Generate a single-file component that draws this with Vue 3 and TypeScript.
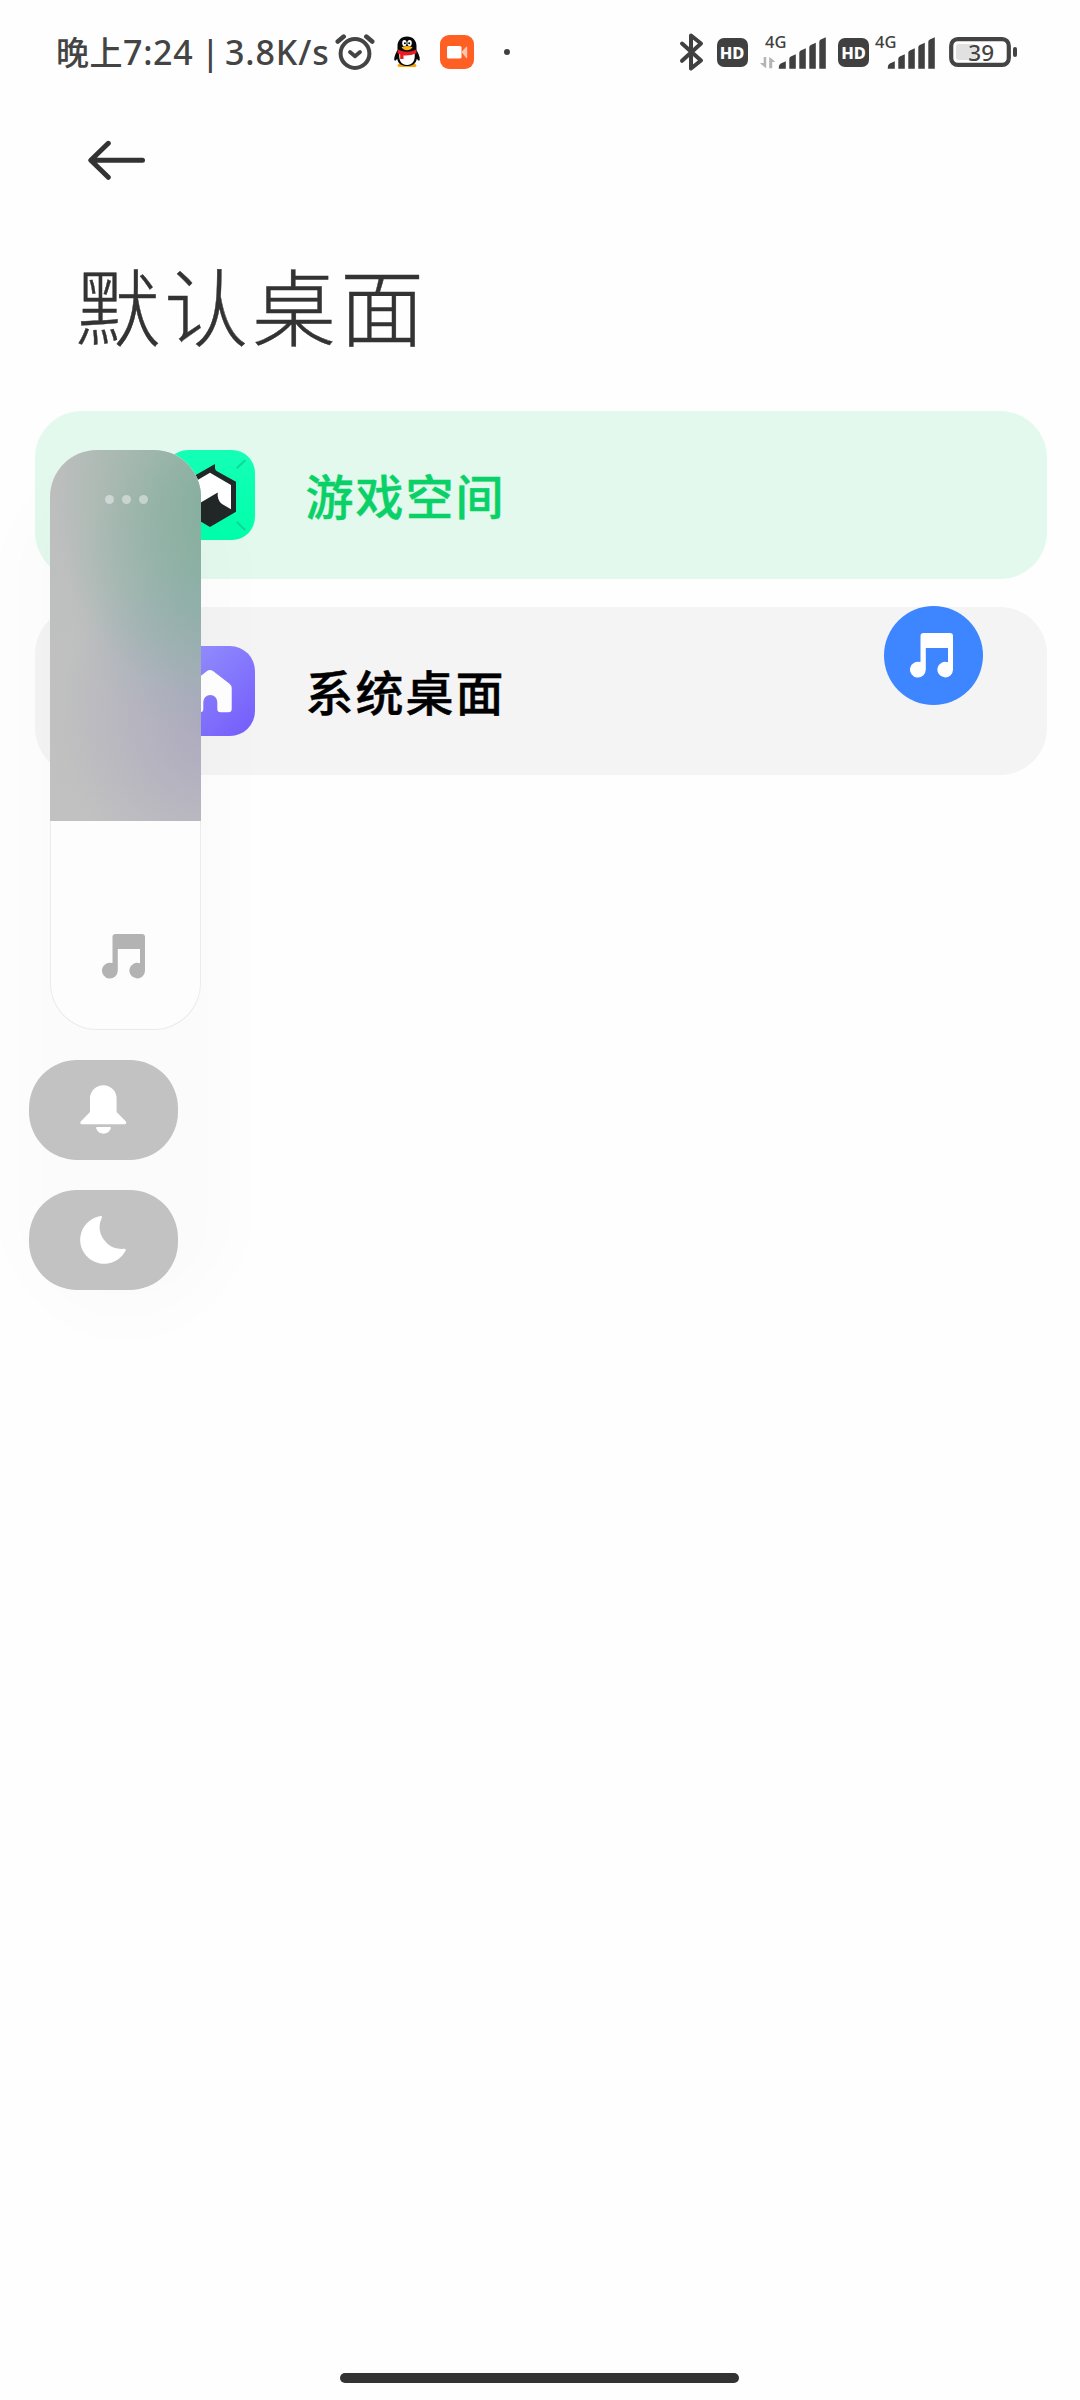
<script setup lang="ts">
interface Launcher {
  id: string
  name: string
  active: boolean
}

const launchers: Launcher[] = [
  { id: 'game', name: '游戏空间', active: true },
  { id: 'system', name: '系统桌面', active: false },
]

const notePath =
  'M13.5 0H40a3 3 0 0 1 3 3v33.5a7.8 7.8 0 1 1-5-7.2V15H15.8v21.5a7.9 7.9 0 1 1-5.3-7.4V3a3 3 0 0 1 3-3z'

const barsPath =
  'M0 30v-1.500q0-2.500 2-3.600l5-2.400v7.500zM10.500 30V20q0-1.500 1.500-2.200l5-2.300V30zM20.500 30V14q0-1.500 1.500-2.200l5-2.300V30zM30.500 30V8.500q0-1.500 1.500-2.200l5-2.300V30zM40.500 30V3q0-1.500 1.500-2.200l5-2.300V30z'
</script>

<template>
  <div class="page">
    <header class="status">
      <div class="status-left">
        <span class="clock"><span class="han">晚上</span><span class="time">7:24</span></span>
        <span class="sep">|</span>
        <span class="speed">3.8K/s</span>
        <svg class="alarm" width="40" height="40" viewBox="0 0 40 40">
          <g fill="none" stroke="#444" stroke-width="4" stroke-linecap="round" stroke-linejoin="round">
            <circle cx="20" cy="21.500" r="14.400" />
            <path d="M2.800 9.500L8.700 4.600M37.200 9.500L31.300 4.600" stroke-width="4.600" />
            <path d="M15 20l5 4.300L25 20" stroke-width="3.800" />
          </g>
        </svg>
        <svg class="qq" width="34" height="34" viewBox="0 0 34 34">
          <path d="M8.500 29q4-2 8.500-1.500T25.500 29l1 1.500q0 1.500-3 1.500h-12q-4 0-4-1.500z" fill="#f7a500" />
          <path d="M17 1.500c6 0 9.500 4.200 9.500 9.500v4c1.500 3 3.500 6.500 3.300 9.500-.2 1.800-1.500 1.500-3-.8C26 28.500 22.500 31 17 31S8 28.500 7.200 23.700c-1.500 2.300-2.800 2.600-3 .8C4 21.500 6 18 7.500 15v-4c0-5.300 3.500-9.500 9.500-9.500z" fill="#080808" />
          <path d="M9.500 17q7.500 3 15 0c1.200 8-1.500 13-7.500 13S8.300 25 9.500 17z" fill="#fff" />
          <path d="M8 14.500q9 4.500 18.500 0v3.700q-6 2.700-13 2.200V24H10.200v-4.600Q8 18.800 7.500 18z" fill="#ed1c24" />
          <ellipse cx="14.400" cy="8" rx="2.200" ry="3.100" fill="#fff" />
          <ellipse cx="19.600" cy="8" rx="2.200" ry="3.100" fill="#fff" />
          <circle cx="14.900" cy="8.200" r="1" /><circle cx="19.200" cy="8.200" r="1" />
          <path d="M11.500 12.300q5.500-2.600 11 0-2 3-5.500 3t-5.500-3z" fill="#f7b416" />
        </svg>
        <svg class="cam" width="34" height="34" viewBox="0 0 34 34">
          <rect width="34" height="34" rx="9" fill="#ff5f22" />
          <path d="M21.500 17l4.700-5.300q1-.5 1 1v9.500q0 1.400-1 .8z" fill="#ffc4ab" />
          <rect x="7" y="11" width="14.500" height="12.500" rx="1.500" fill="#fff" />
        </svg>
        <i class="dot"></i>
      </div>

      <div class="status-right">
        <svg class="bt" width="26" height="40" viewBox="0 0 26 40">
          <path d="M3 11.500L22 28.500 12 36.500V3.500l10 8L3 28.800" fill="none" stroke="#404040" stroke-width="4" stroke-linejoin="round" stroke-linecap="round" />
        </svg>
        <span class="hd">HD</span>
        <svg class="signal first" width="67" height="50" viewBox="0 0 67 50">
          <text x="5" y="21" class="net">4G</text>
          <path d="M6.200 30v11.200q-3-1.800-6.200-5.200h3.700v-6zM9.200 41.200V30q3 1.500 6 5h-3v6.200z" fill="#b4b4b4" />
          <path :d="barsPath" transform="translate(18.800 11.700)" fill="#404040" />
        </svg>
        <span class="hd second">HD</span>
        <svg class="signal" width="60" height="50" viewBox="0 0 60 50">
          <text x="0" y="21" class="net">4G</text>
          <path :d="barsPath" transform="translate(12.800 11.700)" fill="#404040" />
        </svg>
        <svg class="battery" width="68" height="30" viewBox="0 0 68 30">
          <rect x="2.200" y="2.200" width="57.600" height="25.600" rx="6.500" fill="none" stroke="#444" stroke-width="4.200" />
          <rect x="7" y="7" width="20" height="16" rx="3" fill="#e1e1e1" />
          <rect x="64" y="10" width="4" height="10" rx="2" fill="#444" />
          <text x="19.300" y="23.600" class="level">39</text>
        </svg>
      </div>
    </header>

    <nav class="nav">
      <svg width="58" height="40" viewBox="0 0 58 40">
        <path d="M54.500 20.300H3M20.300 3.300L2.800 20.300l17.500 17" fill="none" stroke="#333" stroke-width="5" stroke-linecap="round" stroke-linejoin="round" />
      </svg>
    </nav>

    <h1 class="title">默认桌面</h1>

    <main class="list">
      <div v-for="item in launchers" :key="item.id" class="card" :class="{ active: item.active }">
        <svg v-if="item.id === 'game'" width="90" height="90" viewBox="0 0 90 90">
          <defs>
            <linearGradient id="game-bg" x1="0" y1="0" x2="0" y2="1">
              <stop offset="0" stop-color="#14ffb6" />
              <stop offset="1" stop-color="#00ffaa" />
            </linearGradient>
          </defs>
          <rect width="90" height="90" rx="23" fill="url(#game-bg)" />
          <path d="M71.700 18.300L80.300 10.300M71.700 71.700L80.300 80.300M18.300 18.300L9.700 10.300M18.300 71.700L9.700 80.300" stroke="#08dc98" stroke-width="2.200" />
          <path d="M50 14v4q0 2.200 2 3.200l19 10.500v30L45 77 19 61.700v-30z" fill="#222827" />
          <path d="M45 22.700L66 35v24.300L57 54q-5-3.500-4.300-11.500L24 59.500V35z" fill="#fff" />
        </svg>
        <svg v-else width="90" height="90" viewBox="0 0 90 90">
          <defs>
            <linearGradient id="home-bg" x1="0" y1="0" x2="1" y2="1">
              <stop offset="0.200" stop-color="#928dff" />
              <stop offset="1" stop-color="#745bfc" />
            </linearGradient>
          </defs>
          <rect width="90" height="90" rx="25" fill="url(#home-bg)" />
          <path d="M42 25q3-2.200 6 0l16.500 12.800q2.200 1.800 2.200 4.500V63q0 3.300-3.300 3.300h-7.800q-3.300 0-3.300-3.300v-7a7 7 0 0 0-14 0v7q0 3.300-3.300 3.300h-8q-3.300 0-3.300-3.300V42.300q0-2.700 2.200-4.500z" fill="#fff" />
        </svg>
        <span class="name">{{ item.name }}</span>
      </div>
    </main>

    <i class="home-bar"></i>

    <div class="fab">
      <svg width="43" height="44.500" viewBox="0 0 43 44.500"><path :d="notePath" fill="#fff" /></svg>
    </div>

    <i class="haze"></i>
    <aside class="volume">
      <div class="level-empty">
        <div class="more"><i></i><i></i><i></i></div>
      </div>
      <div class="level-full">
        <svg width="43" height="44.500" viewBox="0 0 43 44.500"><path :d="notePath" fill="#b3b3b3" /></svg>
      </div>
    </aside>
    <aside class="modes">
      <div class="mode">
        <svg width="149" height="100" viewBox="0 0 149 100">
          <path d="M61 38.500a13.300 13.300 0 0 1 26.600 0V52l9.300 9.500q1 2.700-1.500 2.700H53q-2.500 0-1.300-2.700L61 52zM68 67h13q1.500.3.800 1.500-2.300 5.200-7.300 5.200t-7.300-5.200Q66.500 67.300 68 67z" fill="#fff" />
        </svg>
      </div>
      <div class="mode">
        <svg width="149" height="100" viewBox="0 0 149 100">
          <path d="M71.500 26.100q2-.2 1.200 1.800A22 22 0 0 0 95 58.800q2.300-.2 1.500 2A24 24 0 1 1 71.500 26.100z" fill="#fff" />
        </svg>
      </div>
    </aside>
  </div>
</template>

<style>
body {
  margin: 0;
  background: #fefefe;
}
</style>

<style scoped>
.page {
  position: relative;
  display: flex;
  flex-direction: column;
  width: 1080px;
  height: 2400px;
  overflow: hidden;
  background: #fefefe;
  font-family: 'Noto Sans', 'Noto Sans CJK SC', sans-serif;
}
svg {
  display: block;
  flex: none;
}
.status {
  display: flex;
  justify-content: space-between;
  box-sizing: border-box;
  height: 104px;
  padding: 0 63px 0 56px;
  color: #444;
}
.status-left,
.status-right {
  display: flex;
  align-items: center;
  height: 104px;
}
.clock,
.sep,
.speed {
  font-size: 34px;
  font-weight: 500;
  line-height: 48px;
  white-space: nowrap;
}
.clock {
  display: flex;
  width: 138px;
}
.han {
  margin-top: -1px;
  font-family: 'Noto Sans CJK SC', sans-serif;
  font-size: 33px;
  letter-spacing: 0.5px;
}
.time {
  letter-spacing: 0.7px;
}
.sep {
  width: 14px;
  margin-left: 7px;
  text-align: center;
}
.speed {
  width: 105px;
  margin-left: 10px;
  letter-spacing: 0.9px;
}
.alarm {
  margin-left: 5px;
}
.qq {
  margin-left: 15px;
}
.cam {
  margin-left: 16px;
}
.dot {
  width: 6px;
  height: 6px;
  margin-left: 30px;
  border-radius: 50%;
  background: #404040;
}
.hd {
  width: 31px;
  height: 29px;
  margin-left: 12px;
  border-radius: 7px;
  background: #404040;
  color: #fff;
  font-size: 16.500px;
  font-weight: 800;
  line-height: 29px;
  text-align: center;
}
.signal {
  margin-left: 6px;
}
.signal.first {
  margin-left: 12.500px;
}
.hd.second {
  margin-left: 11px;
}
.net {
  fill: #404040;
  font-size: 16.500px;
  font-weight: 500;
}
.battery {
  margin-left: 14px;
}
.level {
  fill: #444;
  font-size: 22.500px;
  font-weight: 500;
}
.nav {
  padding: 36px 0 0 88px;
}
.title {
  margin: 62px 0 0 76px;
  color: #333;
  font-family: 'Noto Sans CJK SC', sans-serif;
  font-size: 84px;
  font-weight: 300;
  line-height: 124px;
  letter-spacing: 4px;
  -webkit-text-stroke: 0.400px #333;
}
.list {
  display: flex;
  flex-direction: column;
  gap: 28px;
  margin: 45px 33px 0 35px;
}
.card {
  display: flex;
  align-items: center;
  box-sizing: border-box;
  height: 168px;
  padding-left: 130px;
  border-radius: 47px;
  background: #f4f4f4;
  color: #000;
}
.card.active {
  background: #e3f9ed;
  color: #0ad167;
}
.name {
  margin: -3px 0 0 50.500px;
  font-family: 'Noto Sans CJK SC', sans-serif;
  font-size: 48px;
  font-weight: 500;
  line-height: 70px;
  letter-spacing: 2px;
  -webkit-text-stroke: 0.400px currentColor;
}
.home-bar {
  width: 399px;
  height: 10px;
  margin: auto 0 17px 340px;
  border-radius: 5px;
  background: #333;
}
.fab {
  position: absolute;
  top: 606px;
  left: 884px;
  display: flex;
  align-items: center;
  justify-content: center;
  box-sizing: border-box;
  width: 99px;
  height: 99px;
  padding-right: 4px;
  border-radius: 50%;
  background: #3d86ff;
}
.haze {
  position: absolute;
  top: 470px;
  left: 20px;
  width: 210px;
  height: 850px;
  border-radius: 105px;
  background: rgba(0, 0, 0, 0.012);
  filter: blur(24px);
}
.volume {
  position: absolute;
  top: 450px;
  left: 50px;
  display: flex;
  flex-direction: column;
  box-sizing: border-box;
  width: 151px;
  height: 580px;
  overflow: hidden;
  border-radius: 47px;
  background: #fdfdfd;
  box-shadow: inset 0 0 0 1px #ebebeb;
}
.level-empty {
  height: 371px;
  background:
    radial-gradient(165px 200px at 112% 14%, rgba(122, 172, 150, 0.85), rgba(150, 182, 168, 0) 100%),
    radial-gradient(150px 150px at 112% 38%, rgba(135, 172, 172, 0.6), rgba(155, 178, 178, 0) 100%),
    radial-gradient(160px 170px at 112% 72%, rgba(163, 158, 190, 0.7), rgba(178, 175, 190, 0) 100%),
    linear-gradient(180deg, #bcbebd, #c1c1c1);
}
.more {
  display: flex;
  justify-content: center;
  gap: 8px;
  padding: 45px 0 0 1px;
}
.more i {
  width: 9px;
  height: 9px;
  border-radius: 50%;
  background: rgba(255, 255, 255, 0.42);
}
.level-full {
  padding: 113px 0 0 52px;
}
.modes {
  position: absolute;
  top: 1060px;
  left: 29px;
  display: flex;
  flex-direction: column;
  gap: 30px;
}
.mode {
  width: 149px;
  height: 100px;
  border-radius: 48px;
  background: #c2c2c2;
}
</style>
